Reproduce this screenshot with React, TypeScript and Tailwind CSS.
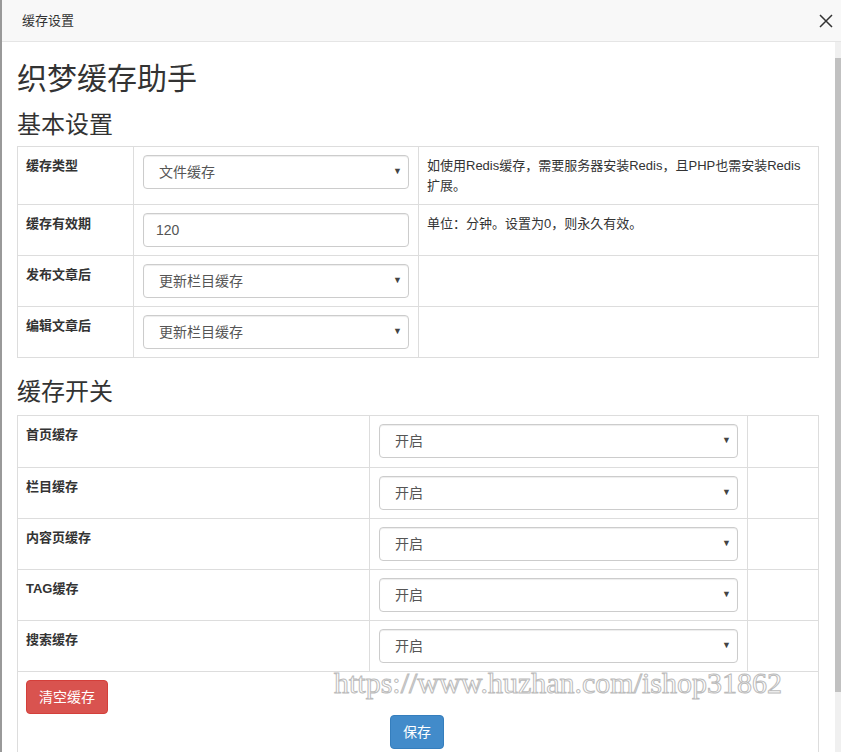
const font = { fontFamily: '"Liberation Sans", "Noto Sans CJK SC", sans-serif' };

function Select({ value }: { value: string }) {
  return (
    <div className="h-[34px] border border-[#ccc] rounded-[4px] bg-white flex items-center justify-between pl-[15px] pr-[6px] text-[14px] text-[#555] shadow-[inset_0_1px_1px_rgba(0,0,0,0.075)]">
      <span>{value}</span>
      <span className="text-[9px] text-[#444]">▼</span>
    </div>
  );
}

function Input({ value }: { value: string }) {
  return (
    <div className="h-[34px] border border-[#ccc] rounded-[4px] bg-white flex items-center px-[12px] text-[14px] text-[#555] shadow-[inset_0_1px_1px_rgba(0,0,0,0.075)]">
      {value}
    </div>
  );
}

const basic = [
  { label: "缓存类型", ctl: <Select value="文件缓存" />, note: "如使用Redis缓存，需要服务器安装Redis，且PHP也需安装Redis扩展。", h: "h-[57px]" },
  { label: "缓存有效期", ctl: <Input value="120" />, note: "单位：分钟。设置为0，则永久有效。", h: "h-[51px]" },
  { label: "发布文章后", ctl: <Select value="更新栏目缓存" />, note: "", h: "h-[51px]" },
  { label: "编辑文章后", ctl: <Select value="更新栏目缓存" />, note: "", h: "h-[51px]" },
];

const switches = ["首页缓存", "栏目缓存", "内容页缓存", "TAG缓存", "搜索缓存"];

export default function App() {
  return (
    <div style={font} className="relative w-[841px] h-[752px] overflow-hidden bg-white text-[#333]">
      <div className="flex h-full">
        <div className="w-[2px] bg-[#999]" />
        <div className="flex-1 flex flex-col">
          <div className="h-[42px] shrink-0 bg-[#f8f8f8] border-b border-[#e5e5e5] flex items-center justify-between pl-[20px] pr-[8px] text-[13px]">
            <span>缓存设置</span>
            <svg width="14" height="14" viewBox="0 0 14 14" stroke="#333" strokeWidth="1.5"><path d="M1 1L13 13M13 1L1 13" /></svg>
          </div>
          <div className="flex flex-1 min-h-0">
            <div className="flex-1 pl-[15px] pr-[16px]">
              <h1 className="text-[30px] leading-[34px] mt-[20px] mb-[15px]">织梦缓存助手</h1>
              <h2 className="text-[24px] leading-[28px] mb-[7px]">基本设置</h2>
              <div className="border border-[#ddd] text-[13px]">
                {basic.map((r, i) => (
                  <div key={i} className={`flex ${r.h} ${i ? "border-t border-[#ddd]" : ""}`}>
                    <div className="w-[116px] border-r border-[#ddd] px-[8px] pt-[9px] font-bold">{r.label}</div>
                    <div className="w-[285px] border-r border-[#ddd] px-[9px] pt-[8px]">{r.ctl}</div>
                    <div className="flex-1 px-[8px] pt-[9px] leading-[20px]">{r.note}</div>
                  </div>
                ))}
              </div>
              <h2 className="text-[24px] leading-[28px] mt-[20px] mb-[9px]">缓存开关</h2>
              <div className="border border-[#ddd] border-b-0 text-[13px]">
                {switches.map((s, i) => (
                  <div key={i} className={`flex h-[51px] ${i ? "border-t border-[#ddd]" : ""}`}>
                    <div className="w-[352px] border-r border-[#ddd] px-[8px] pt-[9px] font-bold">{s}</div>
                    <div className="w-[378px] border-r border-[#ddd] px-[9px] pt-[8px]"><Select value="开启" /></div>
                    <div className="flex-1" />
                  </div>
                ))}
                <div className="border-t border-[#ddd] h-[120px] px-[8px] pt-[8px]">
                  <button className="bg-[#d9534f] border border-[#d43f3a] text-white text-[14px] rounded-[4px] px-[12px] h-[34px]">清空缓存</button>
                  <div className="flex justify-center mt-[1px] pr-[2px]">
                    <button className="bg-[#428bca] border border-[#357ebd] text-white text-[14px] rounded-[4px] px-[12px] h-[34px]">保存</button>
                  </div>
                </div>
              </div>
            </div>
            <div className="w-[6px] bg-[#f0f0f0] flex flex-col pt-[16px] pb-[60px]">
              <div className="flex-1 bg-[#c1c1c1]" />
            </div>
          </div>
        </div>
      </div>
      <div className="absolute left-[334px] top-[660px] text-[30px] text-transparent [-webkit-text-stroke:1px_#bbb]" style={{ fontFamily: '"Liberation Serif", serif' }}>
        https://www.huzhan.com/ishop31862
      </div>
    </div>
  );
}
